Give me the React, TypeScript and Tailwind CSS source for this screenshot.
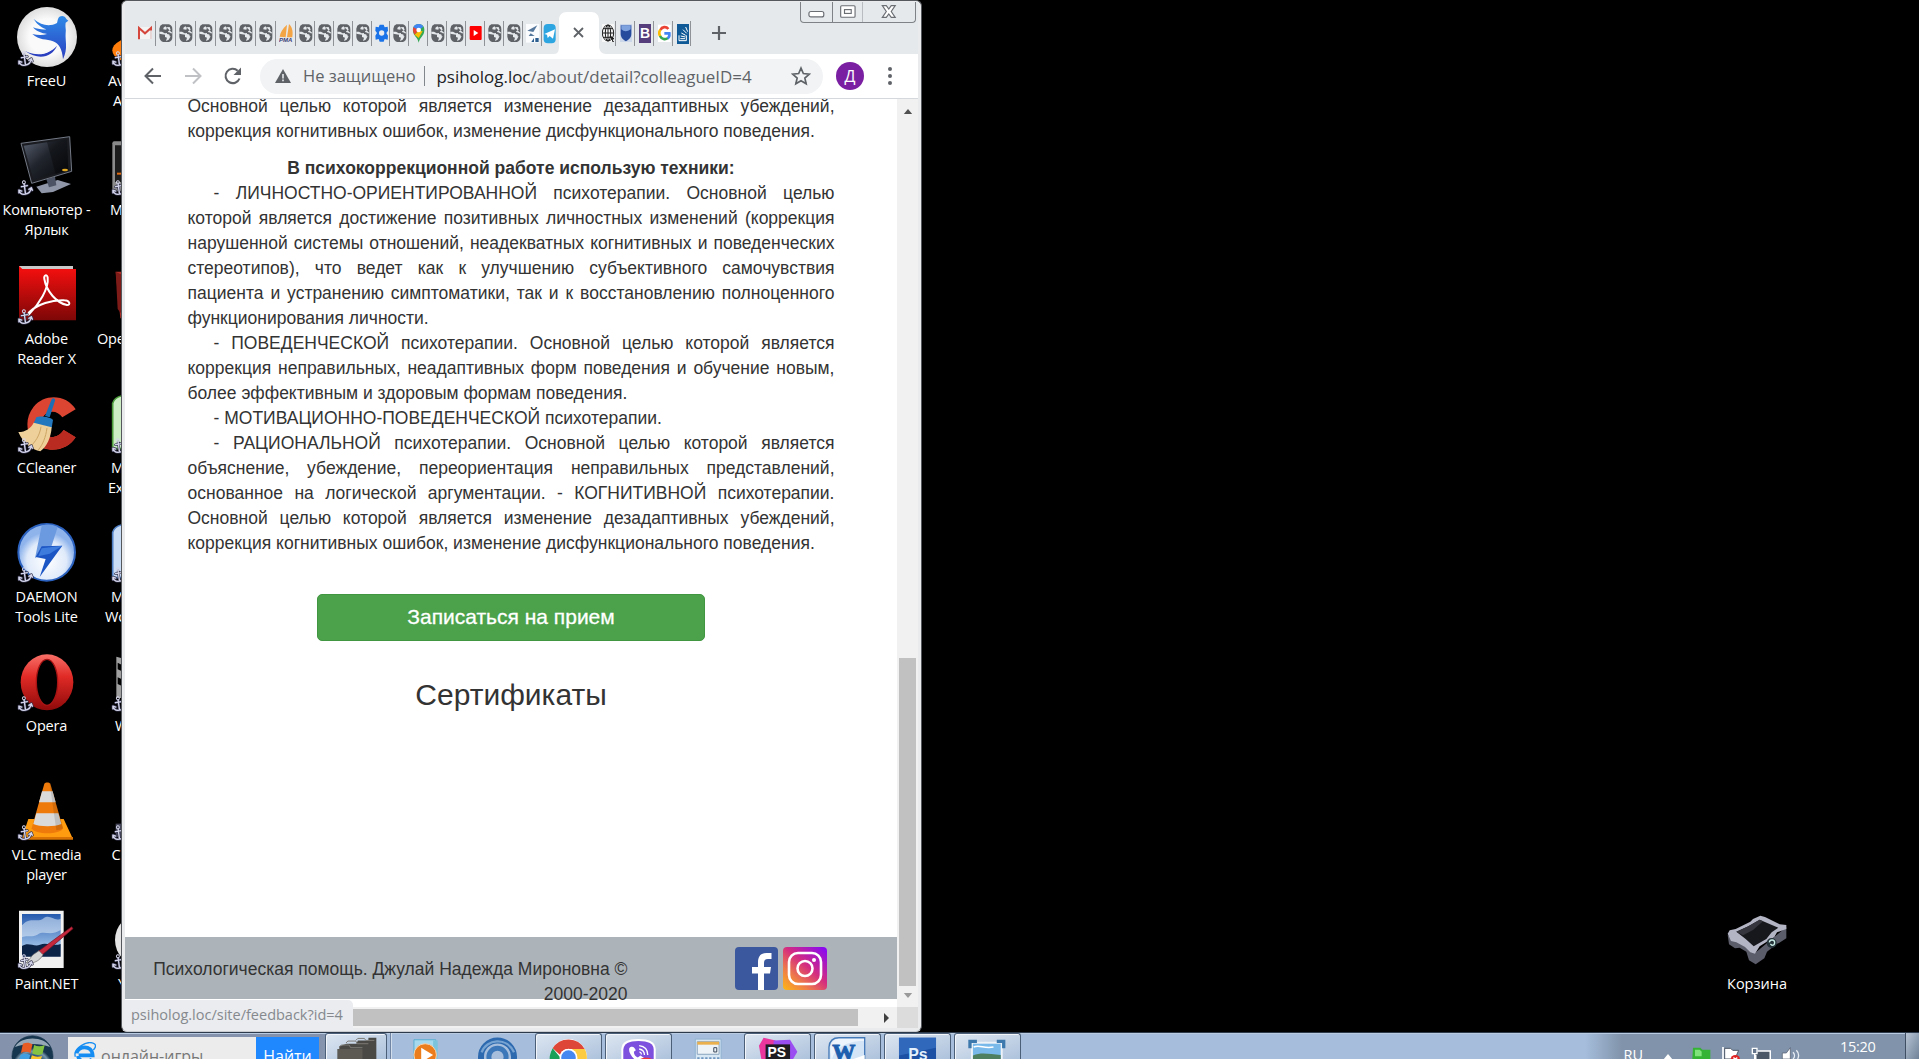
import React from "react";

const UI = "font-['Open_Sans','Noto_Sans',sans-serif]";
const ARIAL = "font-['Liberation_Sans',Arial,sans-serif]";

function Anchor() {
  return (
    <g transform="translate(2,136) rotate(-8 20 20)" fill="none" strokeLinecap="round">
      <path d="M21 8v30M12 15l18-1M3 24c2 20 32 20 38-2M3 24l-1 8M3 24l8 4M41 22l-8 4M41 22l2 8" stroke="#34344e" strokeWidth="8" />
      <path d="M21 8v30M12 15l18-1M3 24c2 20 32 20 38-2M3 24l-1 8M3 24l8 4M41 22l-8 4M41 22l2 8" stroke="#d4d4ea" strokeWidth="4" />
      <circle cx="21" cy="3" r="4.500" stroke="#d4d4ea" strokeWidth="3" />
    </g>
  );
}

function FreeU() {
  return (
    <>
      <defs>
        <radialGradient id="fu"><stop offset=".6" stopColor="#fafafa" /><stop offset="1" stopColor="#dedede" /></radialGradient>
        <linearGradient id="fub" x1="0" y1="0" x2="0" y2="1"><stop offset="0" stopColor="#2f8be8" /><stop offset="1" stopColor="#2a3fc0" /></linearGradient>
      </defs>
      <circle cx="90" cy="90" r="90" fill="url(#fu)" />
      <path d="M50 36c24 20 48 24 70 12 2-6 2-10 4-14 4-10 20-10 24 2l6 5-8 6c-2 14 2 20 0 30-2 26 8 46-8 80-2-30-12-48-30-54-18-8-42-2-62-22 16 4 32 4 44 0-16-2-32-8-42-20 14 5 28 8 40 6-18-6-30-18-38-31z" fill="url(#fub)" />
      <path d="M24 132c40 18 72 10 96-16-14 34-54 46-96 16z" fill="#2a3fc0" />
      <path d="M26 130c36 14 66 6 88-14-18 26-52 34-88 14z" fill="#f6f6f6" />
    </>
  );
}

function Computer() {
  return (
    <>
      <defs>
        <linearGradient id="pc" x1="0" y1="0" x2="1" y2="1"><stop offset="0" stopColor="#596171" /><stop offset=".45" stopColor="#20242c" /><stop offset="1" stopColor="#07080a" /></linearGradient>
      </defs>
      <path d="M58 152l64-20 40 12-54 24-34 4z" fill="#8f96a8" />
      <path d="M88 130l26-8 4 26-22 6z" fill="#4c5364" />
      <path d="M12 22l146-20 6 104-120 36z" fill="#191b20" stroke="#747a86" strokeWidth="3" />
      <path d="M20 29l130-19 4 92-104 30z" fill="url(#pc)" />
      <path d="M90 18l60-8 4 92-38 12z" fill="#000" opacity=".35" />
      <ellipse cx="144" cy="102" rx="9" ry="4" fill="#e0a820" />
    </>
  );
}

function Adobe() {
  return (
    <>
      <defs>
        <linearGradient id="ad" x1="0" y1="0" x2="0" y2="1"><stop offset="0" stopColor="#fa0f0f" /><stop offset="1" stopColor="#7d0707" /></linearGradient>
      </defs>
      <path d="M6 3h162v12H6z" fill="#c9c9c9" />
      <path d="M6 3l10 9h161v154H6z" fill="url(#ad)" />
      <path d="M36 148c30-30 60-78 56-110-2-12-12-8-10 4 6 36 36 72 68 78 12 0 8-14-8-14-38-2-80 12-104 34-6 8-6 12-2 8z" fill="none" stroke="#fff" strokeWidth="6" />
    </>
  );
}

function CCleaner() {
  return (
    <>
      <path d="M176 46C150 2 84-4 50 38c-34 42-20 104 26 124 40 14 80 0 100-32l-36-22c-14 22-42 28-58 12-16-18-14-46 4-60 16-12 38-8 50 10z" fill="#dc4531" />
      <path d="M176 130l-36-22c-14 22-42 28-58 12L64 154c40 24 90 12 112-24z" fill="#b92a20" />
      <path d="M104 16c4-6 12-2 10 4L98 70 84 66z" fill="#1d6fb5" />
      <path d="M58 70c8-6 44-2 50 8l-4 24-54-14z" fill="#2377bd" />
      <path d="M50 86l54 14c-2 30-14 58-34 72-24-4-52-24-66-58 22 0 38-12 46-28z" fill="#eed09a" />
      <path d="M72 98c-4 28-18 46-32 60M90 102c-4 28-12 48-26 66" stroke="#cda665" strokeWidth="3" fill="none" />
    </>
  );
}

function Daemon() {
  return (
    <>
      <defs>
        <radialGradient id="dm" cx=".5" cy=".65"><stop offset="0" stopColor="#fff" /><stop offset=".7" stopColor="#dfeafa" /><stop offset="1" stopColor="#8fb4ec" /></radialGradient>
      </defs>
      <circle cx="89" cy="88" r="85" fill="url(#dm)" stroke="#2b62c0" strokeWidth="6" />
      <path d="M74 8c16-6 36-4 48 4l-18 56-30 22-20 16z" fill="#6c9ae0" />
      <path d="M136 68L68 162l18-54-30-6 18-32z" fill="#1c55c4" />
      <path d="M74 76l62-8-38 24-34 8z" fill="#3d7bdc" />
    </>
  );
}

function OperaIcon() {
  return (
    <>
      <defs>
        <linearGradient id="op" x1="0" y1="0" x2="0" y2="1"><stop offset="0" stopColor="#f87068" /><stop offset=".4" stopColor="#e02a26" /><stop offset="1" stopColor="#8e0a0a" /></linearGradient>
      </defs>
      <ellipse cx="90" cy="91" rx="79" ry="84" fill="url(#op)" />
      <ellipse cx="90" cy="91" rx="32" ry="69" fill="#000" stroke="#a81414" strokeWidth="4" />
    </>
  );
}

function Vlc() {
  return (
    <>
      <path d="M34 114h106l28 60H14z" fill="#ff9c10" />
      <path d="M14 168h154v8H14z" fill="#d97404" />
      <path d="M82 8c4-5 14-5 18 0l38 134c-8 20-86 20-94 0z" fill="#ee7a0c" />
      <path d="M75 31h32l9 33H66zM58 97h66l9 32c-20 9-64 9-84 0z" fill="#dadada" />
      <path d="M98 8l20 140c10-1 18-4 20-8L101 10z" fill="#000" opacity=".12" />
    </>
  );
}

function PaintNet() {
  return (
    <>
      <defs>
        <linearGradient id="pn" x1="0" y1="0" x2="0" y2="1"><stop offset="0" stopColor="#2459ad" /><stop offset=".7" stopColor="#8fb5e2" /><stop offset="1" stopColor="#d7e4f2" /></linearGradient>
      </defs>
      <path d="M6 2h134v172H6z" fill="#f1f1f1" />
      <path d="M15 12h116v128H15z" fill="url(#pn)" />
      <path d="M15 46c26-30 44-4 66-22 20-12 30 12 50 2v34c-30 20-50 0-70 14-18 10-30 0-46 8z" fill="#e4eefa" opacity=".55" />
      <path d="M15 108c20-14 36 4 54-4 20-8 40 6 62-2v38H15z" fill="#0c2348" />
      <path d="M164 50l4 6-92 78-12-10z" fill="#c5283d" stroke="#6f1020" strokeWidth="2" />
      <path d="M78 134l-12-12-18 12c-8 8-8 14-20 24 20 4 40-4 50-24z" fill="#d5d5d5" stroke="#666" strokeWidth="2" />
    </>
  );
}

const desktopItems = [
  { icon: <FreeU />, lines: ["FreeU"] },
  { icon: <Computer />, lines: ["Компьютер -", "Ярлык"] },
  { icon: <Adobe />, lines: ["Adobe", "Reader X"] },
  { icon: <CCleaner />, lines: ["CCleaner"] },
  { icon: <Daemon />, lines: ["DAEMON", "Tools Lite"] },
  { icon: <OperaIcon />, lines: ["Opera"] },
  { icon: <Vlc />, lines: ["VLC media", "player"] },
  { icon: <PaintNet />, lines: ["Paint.NET"] },
];

const hiddenItems = [
  { icon: <ellipse cx="80" cy="130" rx="76" ry="40" fill="#ff7d0a" />, lines: [["Avast", "pl-[12px]"], ["Antivirus", "pl-[17px]"]] },
  { icon: <><rect x="4" y="16" width="160" height="150" rx="6" fill="#8b8b8b" /><path d="M12 28h100v110H12z" fill="#1c1c1c" /><path d="M18 110h20v6H18z" fill="#e06a10" /></>, lines: [["Media", "pl-[14px]"]] },
  { icon: <><path d="M14 20h150v140H28z" fill="#b03028" /><path d="M14 20l20 10v120L20 132z" fill="#7d1b18" /></>, lines: [["Open", "pl-[1px]"]], bare: true },
  { icon: <path d="M5 28Q10 8 40 4h120v160H5z" fill="#cdeec5" stroke="#4c9c3c" strokeWidth="5" />, lines: [["Microsoft", "pl-[15px]"], ["Excel", "pl-[12px]"]] },
  { icon: <path d="M5 28Q10 8 40 4h120v160H5z" fill="#c9ddf6" stroke="#4f7fc4" strokeWidth="5" />, lines: [["Microsoft", "pl-[15px]"], ["Word", "pl-[9px]"]] },
  { icon: <path d="M16 14l30 8v24l-26-14v20l26 12v24L20 76v20l26 12v30H16z" fill="#a0a0a0" />, lines: [["Win", "pl-[19px]"]] },
  { icon: <path d="M14 128h20v40H14z" fill="#46465a" />, lines: [["Chrome", "pl-[15.500px]"]] },
  { icon: <circle cx="92" cy="90" r="80" fill="#e4e4e4" />, lines: [["Yandex", "pl-[22px]"]] },
];

function DesktopIcons() {
  return (
    <div className={`absolute left-0 top-0 flex h-[1032px] w-[122px] overflow-hidden text-[14.5px] leading-5 text-white ${UI}`}>
      <div className="w-[93px] shrink-0">
        {desktopItems.map((d, i) => (
          <div key={i} className="flex h-[129px] flex-col items-center pt-[7px]">
            <svg viewBox="0 0 180 180" className="ml-px h-[60px] w-[60px] shrink-0">{d.icon}<Anchor /></svg>
            <div className="mt-[4px] whitespace-nowrap text-center tracking-[-0.2px]">
              {d.lines.map((l) => <div key={l}>{l}</div>)}
            </div>
          </div>
        ))}
      </div>
      <div className="w-[94px] shrink-0">
        {hiddenItems.map((d, i) => (
          <div key={i} className="h-[129px] pl-[3px] pt-[7px]">
            <svg viewBox="0 0 180 180" className="ml-[15px] h-[60px] w-[60px]">{d.icon}{!d.bare && <Anchor />}</svg>
            <div className="mt-[4px] whitespace-nowrap tracking-[-0.2px]">
              {d.lines.map(([l, pad]) => <div key={l} className={pad}>{l}</div>)}
            </div>
          </div>
        ))}
      </div>
    </div>
  );
}

/* Favicons are drawn on a 42x60 grid, cropped the way narrow tabs crop them. */
const globe = (
  <>
    <path d="M10 1h20q10 3 10 14v25q0 11-10 14H12Q2 50 1 38V14Q2 4 10 1z" fill="#5f6368" />
    <path d="M19 7q-8 4-6 9l9 1 2-7 8-1 3 9-7 3-2 6-9 1-8-5H1v6l8 2 9 1v7l6 2-3 10 8-4 6-10-1-8 6-2" fill="#e6e9ec" />
    <path d="M24 27q12 0 11 10" stroke="#5f6368" strokeWidth="6" fill="none" />
  </>
);
const gmail = <><path d="M0 9h42v36H0z" fill="#f4f4f4" /><path d="M3 46V12l18 16 18-16v8" stroke="#d5473c" strokeWidth="6" fill="none" /><path d="M39 18v27" stroke="#d9b9b7" strokeWidth="3" /></>;
const pma = (
  <>
    <path d="M24 2C10 14 4 26 2 38l18 2zM30 0c12 12 12 26 10 40H24z" fill="#f3a445" />
    <text x="0" y="54" fontSize="18" fontWeight="700" fontStyle="italic" fill="#3b3f78" fontFamily="Liberation Sans">PMA</text>
  </>
);
const gear = <><path d="M14 2h12l3 8 9-2 1 12-5 7 5 8-1 12-9-2-3 8H14l-3-8-9 2-1-12 5-8-5-7L2 8l9 2z" fill="#1a73e8" /><circle cx="20" cy="27" r="8" fill="#e8eaed" /></>;
const maps = (
  <>
    <path d="M20 0C6 0 0 12 4 26c4 12 14 16 16 30 3-14 12-18 16-30C40 12 34 0 20 0z" fill="#34a853" />
    <path d="M20 0C12 0 6 4 4 10l14 10L34 8C30 2 26 0 20 0z" fill="#4285f4" />
    <path d="M4 10c-3 8 0 16 4 22l12-14z" fill="#ea4335" /><path d="M8 32l12 10 12-20-12-2z" fill="#fbbc04" />
    <circle cx="20" cy="18" r="7" fill="#fff" />
  </>
);
const youtube = <><rect x="2" y="6" width="36" height="42" rx="3" fill="#f00" /><path d="M14 18l14 9-14 9z" fill="#fff" /></>;
const telegram = <><rect x="2" y="0" width="36" height="58" rx="12" fill="#2ca5e0" /><path d="M4 30l32-14-6 28-10-8-6 6-2-10z" fill="#fff" /></>;
const plane = <><path d="M0 0h40v56H0z" fill="#fafcfe" /><path d="M4 20l30-16-12 20zM8 36h18l-12-8" fill="#56789c" /><path d="M16 54l8-12v12zm12 0V42h10v12z" fill="#2c5d8f" /></>;
const wireGlobe = <g fill="none" stroke="#1f1f1f" strokeWidth="3"><path d="M0 0h36v54H0z" fill="#f7f7f7" stroke="none" /><ellipse cx="18" cy="27" rx="17" ry="24" /><ellipse cx="18" cy="27" rx="8" ry="24" /><path d="M18 3v48M1 27h34M4 14h28M4 40h28" /><path d="M24 36l12 8-6 2 4 8z" fill="#1f1f1f" /></g>;
const shield = <><path d="M0 0h36v54H0z" fill="#cdd7ea" /><path d="M2 4h32v26c0 12-10 18-16 22C10 48 2 40 2 30z" fill="#274b9c" /><path d="M4 4h28v12c-10 8-20 8-28 0z" fill="#7ea2dd" /></>;
const bootstrap = <><rect y="0" width="36" height="57" fill="#563d7c" /><text x="3" y="43" fontSize="42" fontWeight="700" fill="#fff" fontFamily="Liberation Sans">B</text></>;
const google = (
  <g fill="none" strokeWidth="8">
    <path d="M0 2h38v52H0z" fill="#fff" />
    <path d="M31 15C24 6 12 8 7 18" stroke="#ea4335" /><path d="M7 17c-4 6-4 14 0 20" stroke="#fbbc05" />
    <path d="M6 36c5 10 16 12 24 6" stroke="#34a853" /><path d="M29 43c4-3 6-8 5-15H19" stroke="#4285f4" />
  </g>
);
const stack = <><rect width="36" height="60" fill="#0f5a96" /><path d="M6 34v16h22V34M10 44h14M11 36l14 3M13 27l13 7M18 17l11 11M26 9l6 14" stroke="#fff" strokeWidth="3" fill="none" /></>;

const leftTabs = [globe, globe, globe, globe, globe, globe, pma, globe, globe, globe, globe, gear, globe, maps, globe, globe, youtube, globe, globe, plane];
const rightTabs = [wireGlobe, shield, bootstrap, google, stack];

function Fav({ children }: { children: React.ReactNode }) {
  return <svg viewBox="0 0 42 60" className="h-[20px] w-[14px] shrink-0">{children}</svg>;
}

function TabStrip() {
  return (
    <div className="relative flex h-[52px] items-start bg-[#e6e9ec]">
      <div className="mt-[19px] flex h-[25px] w-[434px] shrink-0 items-center pl-[13px]">
        <div className="flex h-full w-[18px] items-center border-r border-[#8f9296]"><Fav>{gmail}</Fav></div>
        {leftTabs.map((f, i) => (
          <div key={i} className={i < 7 ? "flex h-full w-[20px] shrink-0 items-center border-r border-[#8f9296] pl-[3px]" : "flex h-full w-[18.900px] shrink-0 items-center border-r border-[#8f9296] pl-[3px]"}>
            <Fav>{f}</Fav>
          </div>
        ))}
      </div>
      <div className="absolute left-[418px] top-[19px] flex h-[25px] items-center"><Fav>{telegram}</Fav></div>
      <svg viewBox="0 0 52 43" className="-ml-[5px] mt-[9px] h-[43px] w-[52px] shrink-0">
        <path d="M0 43c4 0 5-3 5-8V9c0-5 3-8 8-8h24c5 0 8 3 8 8v26c0 5 3 8 7 8z" fill="#fff" />
        <path d="M20 17l9 9M29 17l-9 9" stroke="#5f6368" strokeWidth="1.800" />
      </svg>
      <div className="-ml-[8.500px] mt-[19px] flex h-[25px] items-center">
        {rightTabs.map((f, i) => (
          <div key={i} className="flex h-full w-[18.800px] shrink-0 items-center border-r border-[#8f9296] pl-[4px]"><Fav>{f}</Fav></div>
        ))}
      </div>
      <svg viewBox="0 0 16 16" className="ml-[20px] mt-[23px] h-[16px] w-[16px]"><path d="M8 1v14M1 8h14" stroke="#5f6368" strokeWidth="2.200" /></svg>
      <div className="absolute right-[2px] top-0 flex h-[21px] w-[116px] overflow-hidden rounded-b-[4px] border border-t-0 border-[#7f8286] text-[#6b6f74]">
        <svg viewBox="0 0 31 20" className="h-full w-[32px] border-r border-[#7f8286]"><rect x="8" y="9.500" width="15" height="5.500" rx="2" fill="#fff" stroke="currentColor" strokeWidth="1.200" /></svg>
        <svg viewBox="0 0 31 20" className="h-full w-[31px] border-r border-[#b9bcc0]"><rect x="8" y="3.500" width="15" height="12" rx="1" fill="#fff" stroke="currentColor" strokeWidth="1.200" /><rect x="12" y="7.500" width="7" height="4" fill="#fff" stroke="currentColor" strokeWidth="1.200" /></svg>
        <svg viewBox="0 0 52 20" className="h-full w-[52px]"><path d="M19.500 3.500h4l2.500 3.500 2.500-3.500h4L28.500 9.500l4 6h-4L26 12l-2.500 3.500h-4l4-6z" fill="#fff" stroke="currentColor" strokeWidth="1.200" /></svg>
      </div>
    </div>
  );
}

function Toolbar() {
  return (
    <div className={`flex h-[45px] items-center border-b border-[#d5d8dc] bg-white text-[#5f6368] ${UI}`}>
      <svg viewBox="0 0 20 20" className="ml-[18px] h-[20px] w-[20px] shrink-0"><path d="M18 10H3M10 2.500L2.500 10l7.500 7.500" stroke="#5f6368" strokeWidth="2" fill="none" /></svg>
      <svg viewBox="0 0 20 20" className="ml-[20px] h-[20px] w-[20px] shrink-0"><path d="M2 10h15M10 2.500l7.500 7.500-7.500 7.500" stroke="#bfc1c4" strokeWidth="2" fill="none" /></svg>
      <svg viewBox="0 0 20 20" className="ml-[20px] h-[20px] w-[20px] shrink-0"><path d="M16.500 12.500a7.200 7.200 0 1 1-1.800-7.800" stroke="#5f6368" strokeWidth="2.100" fill="none" /><path d="M18 1.500V9h-7.500z" fill="#5f6368" /></svg>
      <div className="ml-[17px] flex h-[35px] w-[563px] shrink-0 items-center rounded-full bg-[#f1f3f4]">
        <svg viewBox="0 0 16 14" className="ml-[15px] h-[14px] w-[16px] shrink-0"><path d="M8 0l8 14H0z" fill="#5f6368" /><path d="M8 5v4.500M8 10.600v1.600" stroke="#f1f3f4" strokeWidth="1.500" /></svg>
        <span className="ml-[12px] w-[112px] whitespace-nowrap pt-px text-[16.500px]">Не защищено</span>
        <span className="ml-[9px] h-[20px] w-px bg-[#80868b]" />
        <span className="ml-[11.500px] w-[320px] whitespace-nowrap pt-px text-[16.950px]"><span className="text-[#202124]">psiholog.loc</span>/about/detail?colleagueID=4</span>
        <svg viewBox="0 0 24 24" className="ml-[34px] h-[20px] w-[20px] shrink-0"><path d="M12 2.500l2.800 6.600 7.200.6-5.400 4.700 1.600 7L12 17.700l-6.200 3.700 1.600-7L2 9.700l7.200-.6z" fill="none" stroke="#5f6368" strokeWidth="2" /></svg>
      </div>
      <div className="ml-[13px] flex h-[28px] w-[28px] shrink-0 items-center justify-center rounded-full bg-[#7b1fa2] pb-px text-[16px] text-white">Д</div>
      <svg viewBox="0 0 4 18" className="ml-[24px] h-[18px] w-[4px] shrink-0" fill="#5f6368"><circle cx="2" cy="2" r="2" /><circle cx="2" cy="9" r="2" /><circle cx="2" cy="16" r="2" /></svg>
    </div>
  );
}

function Facebook() {
  return (
    <svg viewBox="0 0 43 43" className="h-[43px] w-[43px]"><rect width="43" height="43" rx="4" fill="#3b579d" /><path d="M23 43V26.500h-6V20h6v-4.500c0-6.500 3-9.500 8.500-9.500h5v6h-3.500c-3 0-4 1.500-4 4v4h7l-1 6.500h-6V43z" fill="#fff" /></svg>
  );
}

function Instagram() {
  return (
    <svg viewBox="0 0 44 43" className="h-[43px] w-[44px]">
      <defs>
        <linearGradient id="ig" x1="0" y1="1" x2=".9" y2="0"><stop offset="0" stopColor="#fdb813" /><stop offset=".3" stopColor="#ee7a4a" /><stop offset=".58" stopColor="#d42c80" /><stop offset="1" stopColor="#8a0af0" /></linearGradient>
      </defs>
      <rect width="44" height="43" rx="4" fill="url(#ig)" />
      <g fill="none" stroke="#fff" strokeWidth="2.600"><rect x="6" y="6" width="32" height="31" rx="9" /><circle cx="22" cy="21.500" r="7.500" /></g>
      <circle cx="31" cy="13" r="2" fill="#fff" />
    </svg>
  );
}

function Page() {
  return (
    <div className={`relative h-[908px] w-[772px] overflow-hidden bg-white text-[17.500px] leading-[25px] text-[#333] ${ARIAL}`}>
      <div className="-mt-[5px] ml-[62.500px] w-[647px] text-justify">
        <p>Основной целью которой является изменение дезадаптивных убеждений, коррекция когнитивных ошибок, изменение дисфункционального поведения.</p>
        <h4 className="mt-[12px] text-center font-bold">В психокоррекционной работе использую техники:</h4>
        <p className="indent-[26px]">- ЛИЧНОСТНО-ОРИЕНТИРОВАННОЙ психотерапии. Основной целью которой является достижение позитивных личностных изменений (коррекция нарушенной системы отношений, неадекватных когнитивных и поведенческих стереотипов), что ведет как к улучшению субъективного самочувствия пациента и устранению симптоматики, так и к восстановлению полноценного функционирования личности.</p>
        <p className="indent-[26px]">- ПОВЕДЕНЧЕСКОЙ психотерапии. Основной целью которой является коррекция неправильных, неадаптивных форм поведения и обучение новым, более эффективным и здоровым формам поведения.</p>
        <p className="indent-[26px]">- МОТИВАЦИОННО-ПОВЕДЕНЧЕСКОЙ психотерапии.</p>
        <p className="indent-[26px]">- РАЦИОНАЛЬНОЙ психотерапии. Основной целью которой является объяснение, убеждение, переориентация неправильных представлений, основанное на логической аргументации. - КОГНИТИВНОЙ психотерапии. Основной целью которой является изменение дезадаптивных убеждений, коррекция когнитивных ошибок, изменение дисфункционального поведения.</p>
        <button className="mx-auto mt-[38px] flex h-[47px] w-[388px] items-center justify-center rounded-[5px] border border-[#419641] bg-[#4ba24b] pb-[2px] text-[21px] font-normal text-white [-webkit-text-stroke:0.3px_white]">Записаться на прием</button>
        <h3 className="mt-[36px] text-center text-[30px] leading-[36px]">Сертификаты</h3>
      </div>
      <div className="absolute left-0 top-[838px] flex h-[62px] w-full bg-[#acb4ba]">
        <div className="w-[502.500px] pt-[20px] text-right">Психологическая помощь. Джулай Надежда Мироновна © 2000-2020</div>
        <div className="ml-[107.500px] mt-[10px] flex gap-[5px]"><Facebook /><Instagram /></div>
      </div>
    </div>
  );
}

function Browser() {
  return (
    <div className="absolute left-[121px] top-0 h-[1032px] w-[801px] rounded-[6px] border border-[#55585c] border-b-[#c9ccd0] bg-[#e9ebed] px-[3px] pb-[3px] pt-px">
      <div className="h-full w-full">
        <TabStrip />
        <Toolbar />
        <div className="flex">
          <Page />
          <div className="flex h-[908px] w-[21px] flex-col items-center bg-[#f1f1f1]">
            <svg viewBox="0 0 10 6" className="mt-[10px] h-[5px] w-[10px] shrink-0"><path d="M5 0l5 6H0z" fill="#505050" /></svg>
            <div className="mt-[544px] h-[328px] w-[17px] bg-[#c1c1c1]" />
            <svg viewBox="0 0 10 6" className="mt-[7px] h-[5px] w-[10px] shrink-0"><path d="M0 0h10L5 6z" fill="#9a9a9a" /></svg>
          </div>
        </div>
        <div className="flex h-[21px]">
          <div className="flex w-[772px] items-center bg-[#f1f1f1]">
            <div className="ml-[130px] h-[17px] w-[603px] bg-[#c1c1c1]" />
            <svg viewBox="0 0 5 10" className="ml-[26px] h-[10px] w-[5px]"><path d="M0 0l5 5-5 5z" fill="#404040" /></svg>
          </div>
          <div className="w-[21px] bg-[#dcdcdc]" />
        </div>
      </div>
      <div className={`absolute left-[2px] top-[999px] h-[30px] w-[229px] rounded-tr-[5px] bg-[#eaecef] pl-[7px] text-[14.500px] leading-[29px] text-[#85898e] ${UI}`}>psiholog.loc/site/feedback?id=4</div>
    </div>
  );
}

function StartOrb() {
  return (
    <svg viewBox="0 0 130 72" className="ml-[11px] mt-[2px] h-[24px] w-[43px] shrink-0">
      <defs><radialGradient id="orb" cx=".5" cy=".8"><stop offset="0" stopColor="#4d9ccb" /><stop offset=".6" stopColor="#1d4c73" /><stop offset=".85" stopColor="#7897ad" /><stop offset="1" stopColor="#16354e" /></radialGradient></defs>
      <circle cx="65" cy="64" r="62" fill="url(#orb)" stroke="#1d3a52" strokeWidth="2" />
      <path d="M12 36C30 2 100 2 118 36c-30-12-76-12-106 0z" fill="#dbe7ef" opacity=".65" />
      <path d="M36 26c10-5 20-4 29 2l-6 26c-10-5-20-5-29 0z" fill="#e85b22" />
      <path d="M70 30c10 5 20 5 32 0l-7 27c-10 5-20 4-31-1z" fill="#83c341" />
      <path d="M29 60c9-5 19-5 29 0l-3 12H26z" fill="#3f9fe0" />
      <path d="M63 61c10 5 20 6 31 2l-3 9H60z" fill="#fbc62b" />
    </svg>
  );
}

const taskIcons = {
  folders: <><path d="M32 20h30l4-10h32V2h24v70H10V28z" fill="#4b4945" /><path d="M10 30l6-6h24l4 8h36M30 18l6-6h24l4 8h34M60 10l6-6h20l4 6h26" stroke="#7c7a75" strokeWidth="3" fill="none" /><path d="M4 36h76v36H4z" fill="#5d5a54" /></>,
  media: <><path d="M24 8h66v64H24z" fill="#a7d9ee" stroke="#59acd0" strokeWidth="3" /><path d="M82 10h14v62H82z" fill="#7cc4de" /><circle cx="58" cy="54" r="34" fill="#ec7d1c" stroke="#f7d3ae" strokeWidth="3" /><path d="M46 32l36 22-36 22z" fill="#fff" /></>,
  at: <><circle cx="62" cy="60" r="50" fill="none" stroke="#2d69ae" strokeWidth="18" /><circle cx="62" cy="60" r="26" fill="none" stroke="#3c77b9" strokeWidth="15" /><path d="M14 46C28 6 90-2 112 46" stroke="#76a3d2" strokeWidth="7" fill="none" /></>,
  chrome: <><circle cx="62" cy="62" r="56" fill="#fff" /><path d="M14 34a56 56 0 0 1 97 2H62a26 26 0 0 0-25 18z" fill="#de4637" /><path d="M14 34C0 60 6 72 8 80h32L36 60z" fill="#1ba05a" /><path d="M111 36c8 14 8 30 4 44H84c8-14 4-34-12-44z" fill="#fccb40" /><circle cx="62" cy="62" r="27" fill="#fff" /><circle cx="62" cy="62" r="22" fill="#4688f1" /></>,
  viber: <><path d="M10 72V36C12 14 30 6 62 6s50 8 52 30v36z" fill="#fff" /><path d="M16 72V38c2-18 16-26 46-26s46 8 46 26v34z" fill="#7d51dd" /><path d="M38 30c-12 6 2 34 22 44h14l6-10-12-8-8 6c-8-4-12-10-12-18l6-4c-2-6-8-14-16-10z" fill="#fff" /><path d="M64 26c16 2 26 12 26 28M64 36c10 2 16 8 16 18M65 45c4 1 6 4 6 8" stroke="#fff" strokeWidth="4" fill="none" /><path d="M62 72c4-12 40-14 46 0z" fill="#f03638" /></>,
  calc: <><path d="M22 6h78v66H22z" fill="#d7e7f4" stroke="#8fb0cf" strokeWidth="3" /><path d="M28 14h66v38H28z" fill="#eef3f8" stroke="#8aa3bd" strokeWidth="3" /><path d="M28 14h66v9H28z" fill="#eab04e" /><path d="M78 32h9v13h-9z" stroke="#38475a" strokeWidth="3" fill="none" /><path d="M28 64h68" stroke="#6f96bf" strokeWidth="6" strokeDasharray="7 5" /></>,
  storm: <><path d="M6 26l14-24 36 8 4 40-30 22H14z" fill="#e9379e" /><path d="M50 10l50-2 22 36-16 28H50z" fill="#9a4df0" /><path d="M26 22h74v50H26z" fill="#1f1b22" /><text x="32" y="60" fontSize="42" fontWeight="700" fill="#fff" fontFamily="Liberation Sans">PS</text></>,
  word: <><path d="M6 72V30C8 8 20 2 36 2h78v70z" fill="#d3e4f7" stroke="#4479b8" strokeWidth="4" /><path d="M14 72C20 40 50 12 112 12V5H36C16 8 10 20 10 40z" fill="#fff" opacity=".6" /><text x="16" y="69" fontSize="70" fontWeight="700" fill="#1c5faf" stroke="#1c5faf" strokeWidth="3" fontFamily="Liberation Serif">W</text><path d="M80 66l34-12v20H84z" fill="#fff" /></>,
  photoshop: <><path d="M6 2h112v70H6z" fill="#1b50a4" /><path d="M6 2h112v30L6 56z" fill="#3069bb" /><text x="34" y="70" fontSize="48" fontWeight="700" fill="#e4f0fc" fontFamily="Liberation Sans">Ps</text></>,
  photo: <><path d="M12 14h96v58H12z" fill="#eef3f8" /><path d="M18 20h84v52H18z" fill="#79b9ea" /><path d="M18 56c26-12 50-4 84-2v18H18z" fill="#4e7f5e" /><path d="M20 30c20-8 30 6 60 0" stroke="#fff" strokeWidth="5" fill="none" /><path d="M4 34V8h26v10H14v16zM116 34V8H90v10h16v16z" fill="#3d79ad" /></>,
};

function TaskIcon({ name }: { name: keyof typeof taskIcons }) {
  return <svg viewBox="0 0 124 72" className="mt-[3px] h-[24px] w-[41px]">{taskIcons[name]}</svg>;
}

const frame = "flex h-full shrink-0 justify-center rounded-t-[3px] border border-b-0 border-[#4c5f79] bg-linear-to-br from-[#dde6f1] to-[#adc2dc] shadow-[inset_1px_1px_0_#f2f6fb]";
const plain = "flex h-full shrink-0 justify-center pt-px";

function Taskbar() {
  return (
    <div className={`absolute bottom-0 left-0 flex h-[27px] w-full overflow-hidden border-t border-[#2d3a4c] bg-[linear-gradient(90deg,#8493ab_0px,#8493ab_320px,#a6bedc_390px,#a6bedc_1585px,#8093aa_1622px,#8093aa_100%)] shadow-[inset_0_1px_0_#b9cbe0] ${UI}`}>
      <StartOrb />
      <div className="ml-[14px] mt-[4px] flex h-[40px] w-[188px] shrink-0 items-start bg-[#ececec]">
        <svg viewBox="0 0 66 60" className="ml-[6px] mt-[5px] h-[20px] w-[22px]"><path d="M8 34C10 12 54 6 56 40H14M12 42c4 22 32 18 42 10" stroke="#168df2" strokeWidth="11" fill="none" /><path d="M4 44C-4 20 40-8 62 6c6 6 0 14-4 18" stroke="#168df2" strokeWidth="4" fill="none" /></svg>
        <span className="ml-[5px] mt-[8px] whitespace-nowrap text-[16px] leading-[22px] text-[#777]">онлайн-игры</span>
      </div>
      <div className="mt-[4px] h-[40px] w-[63px] shrink-0 bg-[#2088ff] pt-[8px] text-center text-[16px] leading-[22px] text-white">Найти</div>
      <div className={`${frame} ml-[6px] w-[62px]`}><TaskIcon name="folders" /></div>
      <div className="ml-[3px] h-full w-[2px] shrink-0 border-x border-l-[#6f85a3] border-r-[#d2deec]" />
      <div className={`${plain} w-[68px]`}><TaskIcon name="media" /></div>
      <div className={`${plain} w-[75px]`}><TaskIcon name="at" /></div>
      <div className={`${frame} w-[67px]`}><TaskIcon name="chrome" /></div>
      <div className={`${frame} ml-[3px] w-[67px]`}><TaskIcon name="viber" /></div>
      <div className={`${plain} w-[72px]`}><TaskIcon name="calc" /></div>
      <div className={`${frame} w-[67px]`}><TaskIcon name="storm" /></div>
      <div className={`${frame} ml-[3px] w-[67px]`}><TaskIcon name="word" /></div>
      <div className={`${frame} ml-[3px] w-[67px]`}><TaskIcon name="photoshop" /></div>
      <div className={`${frame} ml-[3px] w-[67px]`}><TaskIcon name="photo" /></div>
      <div className="ml-auto flex shrink-0 items-start text-white">
        <span className="mt-[12px] text-[14.500px] leading-5">RU</span>
        <svg viewBox="0 0 10 6" className="ml-[20px] mt-[21px] h-[6px] w-[10px]"><path d="M5 0l5 6H0z" fill="#fff" /></svg>
        <svg viewBox="0 0 60 36" className="ml-[18px] mt-[14px] h-[12px] w-[20px]"><path d="M6 2h22l6 6h24v28H4z" fill="#35b335" /><path d="M12 8h14l6 6v14H12z" fill="#7fe27a" /></svg>
        <svg viewBox="0 0 60 36" className="ml-[11px] mt-[14px] h-[12px] w-[20px]"><path d="M3 0v36" stroke="#fff" strokeWidth="5" /><path d="M8 4h18l6 6h18l-6 14 4 12H8z" fill="#fff" stroke="#4b5666" strokeWidth="3" /><circle cx="40" cy="38" r="14" fill="#df2222" /><path d="M34 32l12 8M46 32L34 40" stroke="#fff" strokeWidth="4" /></svg>
        <svg viewBox="0 0 60 36" className="ml-[9px] mt-[14px] h-[12px] w-[20px]"><path d="M20 12h38v28H14V24" fill="#4b5666" stroke="#fff" strokeWidth="5" /><path d="M4 4h14v16H4zM11 20v16" fill="#66768c" stroke="#fff" strokeWidth="4" /></svg>
        <svg viewBox="0 0 60 36" className="ml-[10px] mt-[14px] h-[12px] w-[20px]"><path d="M4 18h12L28 2v34H4z" fill="#fff" stroke="#4b5666" strokeWidth="2" /><path d="M36 16c6 6 6 14 0 20M46 10c8 8 8 18 4 26" stroke="#e8eef5" strokeWidth="4" fill="none" /></svg>
        <span className="ml-[39px] mt-[3px] w-[36px] whitespace-nowrap text-[14.500px] leading-[22px] tracking-[-0.3px]">15:20</span>
        <div className="ml-[29px] h-[27px] w-[14px] border-l border-[#3f4e62] bg-linear-to-br from-[#b7c4d4] to-[#6f8197]" />
      </div>
    </div>
  );
}

function RecycleBin() {
  return (
    <div className={`absolute left-[1710px] top-[907px] flex w-[94px] flex-col items-center text-[14.500px] leading-5 text-white ${UI}`}>
      <svg viewBox="0 0 180 180" className="h-[60px] w-[60px]">
        <path d="M2 84l82 54 94-78v34l-22 14-6 2-30 24-8 20-26 18-20-12-8-26-20-12-14 2-18-12z" fill="#5c5d6b" />
        <path d="M2 80l6-10 18-4 44-22 8-8 22-10 14 4 44 22 20 2v12l-28 10-8 14-44 28-14 22-14-4-16-16-26-14-16-4z" fill="#b3b4c4" />
        <path d="M28 74l36-16 34-20 56 24-20 14-16 20-38 22-24-22z" fill="#17181c" />
        <path d="M28 74l36-16 34-20 10 5-30 26-30 16z" fill="#34353d" />
        <circle cx="134" cy="108" r="15" fill="#26343a" /><path d="M127 106a8 8 0 1 1 8 9l-5-4" stroke="#c9ece4" strokeWidth="4" fill="none" />
      </svg>
      <span className="mt-[7px]">Корзина</span>
    </div>
  );
}

export default function App() {
  return (
    <div className="relative h-[1059px] w-[1919px] overflow-hidden bg-black">
      <DesktopIcons />
      <RecycleBin />
      <Browser />
      <Taskbar />
    </div>
  );
}
